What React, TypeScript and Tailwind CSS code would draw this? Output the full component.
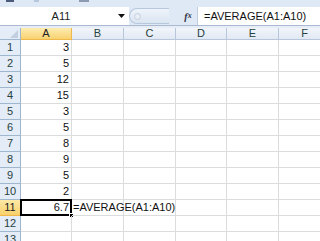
import React from "react";

const values: (number | null)[] = [3, 5, 12, 15, 3, 5, 8, 9, 5, 2];
const cols = ["A", "B", "C", "D", "E", "F"];
const colW = ["w-[51px]", "w-[52px]", "w-[52px]", "w-[51px]", "w-[52px]", "w-[52px]"];

const font = { fontFamily: "'Liberation Sans', Arial, sans-serif" };

const App: React.FC = () => {
  return (
    <div className="w-[320px] h-[241px] overflow-hidden bg-white text-[11px]" style={font}>
      {/* ribbon remnant */}
      <div className="h-[7px] bg-[#dfe9f5] flex items-start pl-[6px]">
        <div className="w-[8px] h-[2px] bg-[#4a5a78]" />
        <div className="ml-[20px] w-[5px] h-[2px] bg-[#b6c6dc]" />
        <div className="ml-[40px] w-[10px] h-[2px] bg-[#8c9bb2]" />
      </div>

      {/* formula bar */}
      <div className="h-[18px] flex bg-[#dfe9f5]">
        <div className="w-[129px] bg-white flex items-center relative">
          <span className="flex-1 text-center text-[#222] pl-[4px]">A11</span>
          <svg width="7" height="4" className="mr-[4px]" viewBox="0 0 7 4">
            <path d="M0 0 H7 L3.5 4 Z" fill="#111" />
          </svg>
        </div>
        <div className="w-[52px] flex items-center">
          <div className="h-[16px] w-[40px] rounded-l-full bg-gradient-to-b from-[#eef3fa] to-[#dbe5f1] border border-[#b7c7dc] border-r-0 flex items-center pl-[4px]">
            <div className="w-[7px] h-[7px] rounded-full bg-[#e9eef5] border border-[#c3cfde]" />
          </div>
        </div>
        <div className="w-[14px] flex items-center justify-center italic font-bold text-[10px] text-[#334]" style={{ fontFamily: "'Liberation Serif', serif" }}>
          f<span className="text-[8px]">x</span>
        </div>
        <div className="flex-1 bg-white ml-[2px] border-l border-[#c0ccdc] flex items-center pl-[6px] text-[#111]">
          =AVERAGE(A1:A10)
        </div>
      </div>

      {/* separator */}
      <div className="h-[3px] bg-[#e6edf6] border-t border-[#aab9cf]" />

      {/* column headers */}
      <div className="flex h-[12px]">
        <div className="w-[21px] shrink-0 bg-[#e4ecf7] border-r border-b border-[#9eb6ce] relative">
          <svg width="8" height="8" viewBox="0 0 8 8" className="absolute right-[2px] bottom-[1px]">
            <path d="M8 0 V8 H0 Z" fill="#c1cfe0" />
          </svg>
        </div>
        {cols.map((c, i) => (
          <div
            key={c}
            className={`${colW[i]} shrink-0 flex items-center justify-center border-r border-b leading-none ${
              i === 0
                ? "bg-gradient-to-b from-[#fdecb0] to-[#f8d26f] border-[#f2b74a] text-[#222]"
                : "bg-gradient-to-b from-[#f1f5fb] to-[#e2e9f3] border-[#b7c6da] text-[#27413e]"
            }`}
          >
            {c}
          </div>
        ))}
      </div>

      {/* rows */}
      {Array.from({ length: 13 }).map((_, r) => {
        const n = r + 1;
        const sel = n === 11;
        return (
          <div key={n} className="flex h-[16px]">
            <div
              className={`w-[21px] shrink-0 flex items-center justify-center border-r border-b ${
                sel
                  ? "bg-gradient-to-b from-[#fde9a6] to-[#f8d06a] border-[#f2b74a] text-[#222]"
                  : "bg-[#e4ecf7] border-[#9eb6ce] text-[#27413e]"
              }`}
            >
              {n}
            </div>
            {cols.map((c, i) => (
              <div
                key={c}
                className={`${colW[i]} shrink-0 border-r border-b border-[#dadcdd] relative flex items-center justify-end pr-[2px] text-[#111]`}
              >
                {i === 0 && n <= 10 && values[r]}
                {i === 0 && sel && (
                  <>
                    <div className="absolute -left-px -top-px -right-px -bottom-px border-2 border-black" />
                    <span className="relative">6.7</span>
                    <div className="absolute -right-[3px] -bottom-[3px] w-[5px] h-[5px] bg-black border border-white" />
                  </>
                )}
                {i === 1 && sel && (
                  <span className="absolute left-[1px] top-0 bottom-0 flex items-center whitespace-nowrap z-10">
                    =AVERAGE(A1:A10)
                  </span>
                )}
              </div>
            ))}
          </div>
        );
      })}
    </div>
  );
};

export default App;
